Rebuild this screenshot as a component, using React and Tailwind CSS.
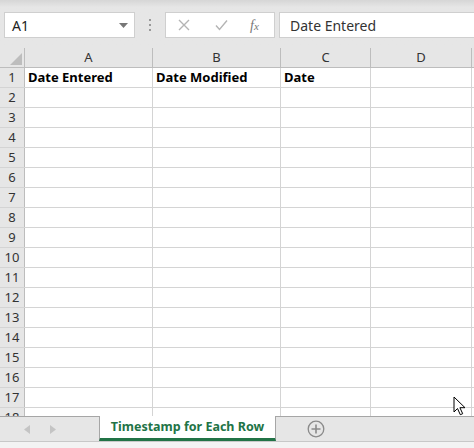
import React from "react";

const COLS = [
  { key: "A", w: "w-[128px]" },
  { key: "B", w: "w-[128px]" },
  { key: "C", w: "w-[90px]" },
  { key: "D", w: "w-[101px]" },
];

const ROW1 = ["Date Entered", "Date Modified", "Date", ""];

function Cell({ w, children, className = "" }) {
  return (
    <div
      className={`${w} shrink-0 h-full border-r border-[#d4d4d4] px-[3px] flex items-center ${className}`}
    >
      {children}
    </div>
  );
}

function Row({ n, values }) {
  return (
    <div className="flex h-[20px] border-b border-[#d4d4d4]">
      <div className="w-[25px] shrink-0 h-full bg-[#e6e6e6] border-r border-[#bdbdbd] flex items-center justify-center text-[13px] text-[#333]">
        {n}
      </div>
      {COLS.map((c, i) => (
        <Cell key={c.key} w={c.w} className="font-bold text-[13px] text-black">
          {values ? values[i] : ""}
        </Cell>
      ))}
      <div className="flex-1 h-full" />
    </div>
  );
}

export default function App() {
  const rows = Array.from({ length: 18 }, (_, i) => i + 1);
  return (
    <div
      className="w-[474px] h-[448px] overflow-hidden flex flex-col bg-white select-none"
      style={{ fontFamily: '"Noto Sans", "Open Sans", sans-serif' }}
    >
      {/* formula bar */}
      <div className="h-[48px] shrink-0 bg-gradient-to-b from-[#d6d6d6] via-[#e6e6e6] via-[15%] to-[#e6e6e6] flex items-start pt-[12px] pl-[4px]">
        <div className="w-[131px] h-[26px] bg-white border border-[#cfcfcf] flex items-center justify-between pl-[7px] pr-[6px] text-[14px] text-[#222]">
          <span>A1</span>
          <svg width="9" height="5" viewBox="0 0 9 5">
            <path d="M0 0h9L4.5 5z" fill="#777" />
          </svg>
        </div>
        <div className="w-[30px] h-[26px] flex flex-col items-center justify-center gap-[3px]">
          <span className="w-[2px] h-[2px] bg-[#999]" />
          <span className="w-[2px] h-[2px] bg-[#999]" />
          <span className="w-[2px] h-[2px] bg-[#999]" />
        </div>
        <div className="w-[110px] h-[26px] bg-white border border-[#cfcfcf] flex items-center pl-[12px]">
          <svg width="12" height="12" viewBox="0 0 12 12">
            <path d="M1 1l10 10M11 1L1 11" stroke="#b4b4b4" strokeWidth="1.4" />
          </svg>
          <svg className="ml-[25px]" width="13" height="12" viewBox="0 0 13 12">
            <path d="M1 6.5l3.5 4L12 1.5" stroke="#b4b4b4" strokeWidth="1.4" fill="none" />
          </svg>
          <span
            className="ml-[22px] text-[14px] italic text-[#777]"
            style={{ fontFamily: '"Liberation Serif", serif' }}
          >
            f<span className="text-[11px]">x</span>
          </span>
        </div>
        <div className="ml-[4px] flex-1 h-[26px] bg-white border border-[#cfcfcf] border-r-0 flex items-center pl-[10px] text-[14px] text-[#333]">
          Date Entered
        </div>
      </div>

      {/* column headers */}
      <div className="flex h-[20px] shrink-0 bg-[#e6e6e6] border-b border-[#bdbdbd]">
        <div className="w-[25px] shrink-0 h-full border-r border-[#bdbdbd] relative">
          <svg className="absolute right-[2px] bottom-[2px]" width="12" height="12" viewBox="0 0 12 12">
            <path d="M12 0V12H0z" fill="#bdbdbd" />
          </svg>
        </div>
        {COLS.map((c) => (
          <div
            key={c.key}
            className={`${c.w} shrink-0 h-full border-r border-[#bdbdbd] flex items-center justify-center text-[13px] text-[#333]`}
          >
            {c.key}
          </div>
        ))}
        <div className="flex-1" />
      </div>

      {/* grid */}
      <div className="flex-1 overflow-hidden">
        {rows.map((n) => (
          <Row key={n} n={n} values={n === 1 ? ROW1 : null} />
        ))}
      </div>

      {/* sheet tabs */}
      <div className="h-[25px] shrink-0 bg-[#e6e6e6] border-t border-[#a6a6a6] flex relative">
        <div className="w-[99px] flex items-center pl-[24px] gap-[20px]">
          <svg width="6" height="9" viewBox="0 0 6 9">
            <path d="M6 0v9L0 4.5z" fill="#c4c4c4" />
          </svg>
          <svg width="6" height="9" viewBox="0 0 6 9">
            <path d="M0 0v9l6-4.5z" fill="#c4c4c4" />
          </svg>
        </div>
        <div className="w-[177px] -mt-px h-[25px] bg-white border-x border-[#a6a6a6] border-b-[3px] border-b-[#217346] flex items-center justify-center text-[12.5px] font-bold text-[#217346]">
          Timestamp for Each Row
        </div>
        <div className="ml-[31px] flex items-center">
          <svg width="18" height="18" viewBox="0 0 18 18">
            <circle cx="9" cy="9" r="7.8" stroke="#8a8a8a" strokeWidth="1.3" fill="none" />
            <path d="M9 4.5v9M4.5 9h9" stroke="#8a8a8a" strokeWidth="1.6" />
          </svg>
        </div>
        <svg className="absolute left-[453px] -top-[21px]" width="13" height="20" viewBox="0 0 13 20">
          <path d="M1 1v15l3.5-3.5 2.8 6.2 2.4-1-2.8-6H12z" fill="#fff" stroke="#000" strokeWidth="1" />
        </svg>
      </div>
      <div className="h-[7px] shrink-0 bg-[#f3f3f3] border-t border-[#c8c8c8]" />
    </div>
  );
}
